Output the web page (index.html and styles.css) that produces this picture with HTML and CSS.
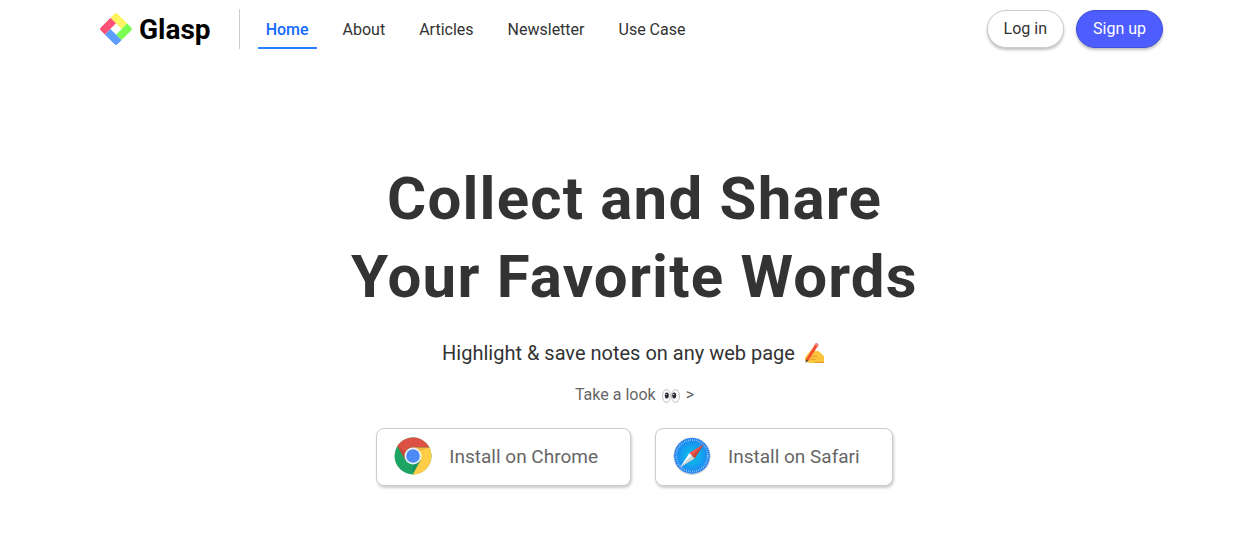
FILE: index.html
```html
<!DOCTYPE html>
<html lang="en">
<head>
  <meta charset="UTF-8">
  <meta name="viewport" content="width=device-width, initial-scale=1.0">
  <title>Glasp</title>
  <link rel="stylesheet" href="styles.css">
</head>
<body>

<header class="header">
  <a class="logo" href="#">
    <svg class="logo-mark" viewBox="0 0 32 32" aria-hidden="true">
      <defs>
        <clipPath id="mark"><rect x="4" y="4" width="24" height="24" rx="3"/></clipPath>
      </defs>
      <g transform="rotate(45 16 16)">
        <g clip-path="url(#mark)">
          <rect x="4" y="4" width="16" height="8" fill="#fff560"/>
          <rect x="20" y="4" width="8" height="16" fill="#7aff52"/>
          <rect x="12" y="20" width="16" height="8" fill="#5c9dff"/>
          <rect x="4" y="12" width="8" height="16" fill="#ff5277"/>
        </g>
      </g>
    </svg>
    <span>Glasp</span>
  </a>

  <nav class="nav">
    <a class="nav-link active" href="#">Home</a>
    <a class="nav-link" href="#">About</a>
    <a class="nav-link" href="#">Articles</a>
    <a class="nav-link" href="#">Newsletter</a>
    <a class="nav-link" href="#">Use Case</a>
  </nav>

  <div class="account">
    <button type="button" class="pill">Log in</button>
    <button type="button" class="pill primary">Sign up</button>
  </div>
</header>

<main class="hero">
  <h1>Collect and Share<br>Your Favorite Words</h1>

  <p class="lead">Highlight &amp; save notes on any web page
    <svg class="hand" viewBox="0 0 24 22" role="img" aria-label="writing hand">
      <path d="M4 13 L9 7 C10 6 12 6.500 12 8 L12 9 L15 9 C17 10 19 12 21 14.500 L21 21 L9 21 C6 21 3 20 2 18 C1.500 16 2.500 14.500 4 13 Z" fill="#fcc43c"/>
      <path d="M8 14 L14 14.500 M7.500 17 L12.500 17.500 M12 20.500 L21 20.500" stroke="#e59a2b" stroke-width="1" fill="none"/>
      <path d="M12.500 1.500 L15.500 3 L5.500 18.500 L3 17.200 Z" fill="#f4512c"/>
      <path d="M12.500 1.500 C13 .5 16 1.500 15.500 3 L14.600 4.500 L11.600 3 Z" fill="#ef7f79"/>
      <path d="M3 17.200 L5.500 18.500 L2.500 21 Z" fill="#5d4037"/>
    </svg>
  </p>

  <a class="look" href="#">Take a look
    <svg class="eyes" viewBox="0 0 18 16" role="img" aria-label="eyes">
      <ellipse cx="4.500" cy="9" rx="4" ry="6.500" fill="#fafafa" stroke="#b5b5b5" stroke-width=".8"/>
      <ellipse cx="13.500" cy="9" rx="4" ry="6.500" fill="#fafafa" stroke="#b5b5b5" stroke-width=".8"/>
      <ellipse cx="4.800" cy="8.500" rx="2" ry="3" fill="#292c38"/>
      <ellipse cx="12.200" cy="8.500" rx="2" ry="3" fill="#292c38"/>
      <circle cx="4.200" cy="7.500" r=".6" fill="#fff"/>
      <circle cx="11.600" cy="7.500" r=".6" fill="#fff"/>
    </svg>
    &gt;</a>

  <div class="installs">
    <button type="button" class="install">
      <svg class="browser-icon" viewBox="0 0 38 38" aria-hidden="true">
        <circle cx="19" cy="19" r="18.500" fill="#1da362"/>
        <path d="M19 10.500 H35.400 A18.500 18.500 0 0 1 18.600 37.500 L26.600 23.200 Z" fill="#ffcd46"/>
        <path d="M3.400 9 A18.500 18.500 0 0 1 35.400 10.500 H19 A8.500 8.500 0 0 0 11.500 23 Z" fill="#dd5144"/>
        <path d="M3.400 9 L11.500 23 L12 15 Z" fill="#b83a31" opacity=".5"/>
        <path d="M19 10.500 H35.400 L26 14 Z" fill="#e4aa31" opacity=".5"/>
        <path d="M26.600 23.200 L18.600 37.500 L19 27 Z" fill="#11804a" opacity=".4"/>
        <circle cx="19" cy="19" r="8.500" fill="#f1f1f1"/>
        <circle cx="19" cy="19" r="6.800" fill="#4c8bf5"/>
      </svg>
      <span>Install on Chrome</span>
    </button>

    <button type="button" class="install">
      <svg class="browser-icon" viewBox="0 0 38 38" aria-hidden="true">
        <defs>
          <radialGradient id="sky">
            <stop offset="0" stop-color="#06c2e7"/>
            <stop offset=".5" stop-color="#12a8ee"/>
            <stop offset="1" stop-color="#1f7ef0"/>
          </radialGradient>
        </defs>
        <circle cx="19" cy="19.600" r="18.400" fill="#c4c4c4"/>
        <circle cx="19" cy="18.800" r="18.600" fill="#dedede"/>
        <circle cx="19" cy="18.800" r="17.900" fill="url(#sky)"/>
        <circle cx="19" cy="18.800" r="15.800" fill="none" stroke="#fff" stroke-width="2" stroke-dasharray=".6 1.400" opacity=".7"/>
        <path d="M7 30 L22.500 22 L17 16.500 Z" fill="#14689c" opacity=".3"/>
        <path d="M31 7 L16.400 15.900 L19 18.800 Z" fill="#ff5149"/>
        <path d="M31 7 L21.700 21.500 L19 18.800 Z" fill="#d8402f"/>
        <path d="M7 30.500 L16.400 15.900 L19 18.800 Z" fill="#fff"/>
        <path d="M7 30.500 L21.700 21.500 L19 18.800 Z" fill="#d6d6d6"/>
      </svg>
      <span>Install on Safari</span>
    </button>
  </div>
</main>

</body>
</html>
```
FILE: styles.css
```css
* {
  box-sizing: border-box;
}

body {
  margin: 0;
  font-family: Roboto, "Liberation Sans", sans-serif;
  font-size: 16px;
  color: #333;
  background-color: #fff;
}

a {
  color: inherit;
  text-decoration: none;
}

button {
  font-family: inherit;
  cursor: pointer;
}

.header {
  display: flex;
  align-items: center;
  height: 58px;
  padding: 0 94px 0 100px;
}

.logo {
  display: flex;
  align-items: center;
  gap: 7px;
  height: 40px;
  padding-right: 28px;
  border-right: 1px solid #ccc;
  font-size: 28px;
  font-weight: 700;
  color: #000;
}

.logo-mark {
  width: 32px;
  height: 32px;
}

.nav {
  display: flex;
  gap: 18px;
  margin-left: 18px;
}

.nav-link {
  height: 40px;
  padding: 0 8px;
  border-bottom: 2px solid transparent;
  line-height: 42px;
}

.nav-link.active {
  border-bottom-color: #2680ff;
  font-weight: 500;
  color: #146aff;
}

.account {
  display: flex;
  gap: 12px;
  margin-left: auto;
}

.pill {
  height: 38px;
  padding: 0 16px 2px;
  border: 1px solid #ccc;
  border-radius: 20px;
  background-color: #fff;
  box-shadow: 0 2px 3px rgba(0, 0, 0, 0.25);
  font-size: 16px;
  color: #333;
}

.pill.primary {
  border-color: #414fd8;
  background-color: #4d5dff;
  color: #fff;
}

.hero {
  display: flex;
  flex-direction: column;
  align-items: center;
  padding: 102px 0 52px 12px;
  text-align: center;
}

h1 {
  margin: 0;
  font-size: 60px;
  font-weight: 700;
  line-height: 78px;
  letter-spacing: 0.02em;
}

.lead {
  display: flex;
  align-items: center;
  gap: 8px;
  margin: 23px 0 0;
  font-size: 20px;
  line-height: 28px;
}

.hand {
  width: 24px;
  height: 22px;
}

.look {
  display: flex;
  align-items: center;
  gap: 6px;
  margin-top: 16px;
  line-height: 24px;
  color: #666;
}

.eyes {
  width: 18px;
  height: 16px;
}

.installs {
  display: flex;
  flex-wrap: wrap;
  justify-content: center;
  gap: 24px;
  margin-top: 21px;
}

.install {
  display: flex;
  align-items: center;
  gap: 17px;
  height: 58px;
  padding: 0 32px 2px 17px;
  border: 1px solid #ccc;
  border-radius: 8px;
  background-color: #fff;
  box-shadow: 1px 2px 3px rgba(0, 0, 0, 0.2);
  font-size: 19px;
  color: #666;
}

.browser-icon {
  width: 38px;
  height: 38px;
}
```
